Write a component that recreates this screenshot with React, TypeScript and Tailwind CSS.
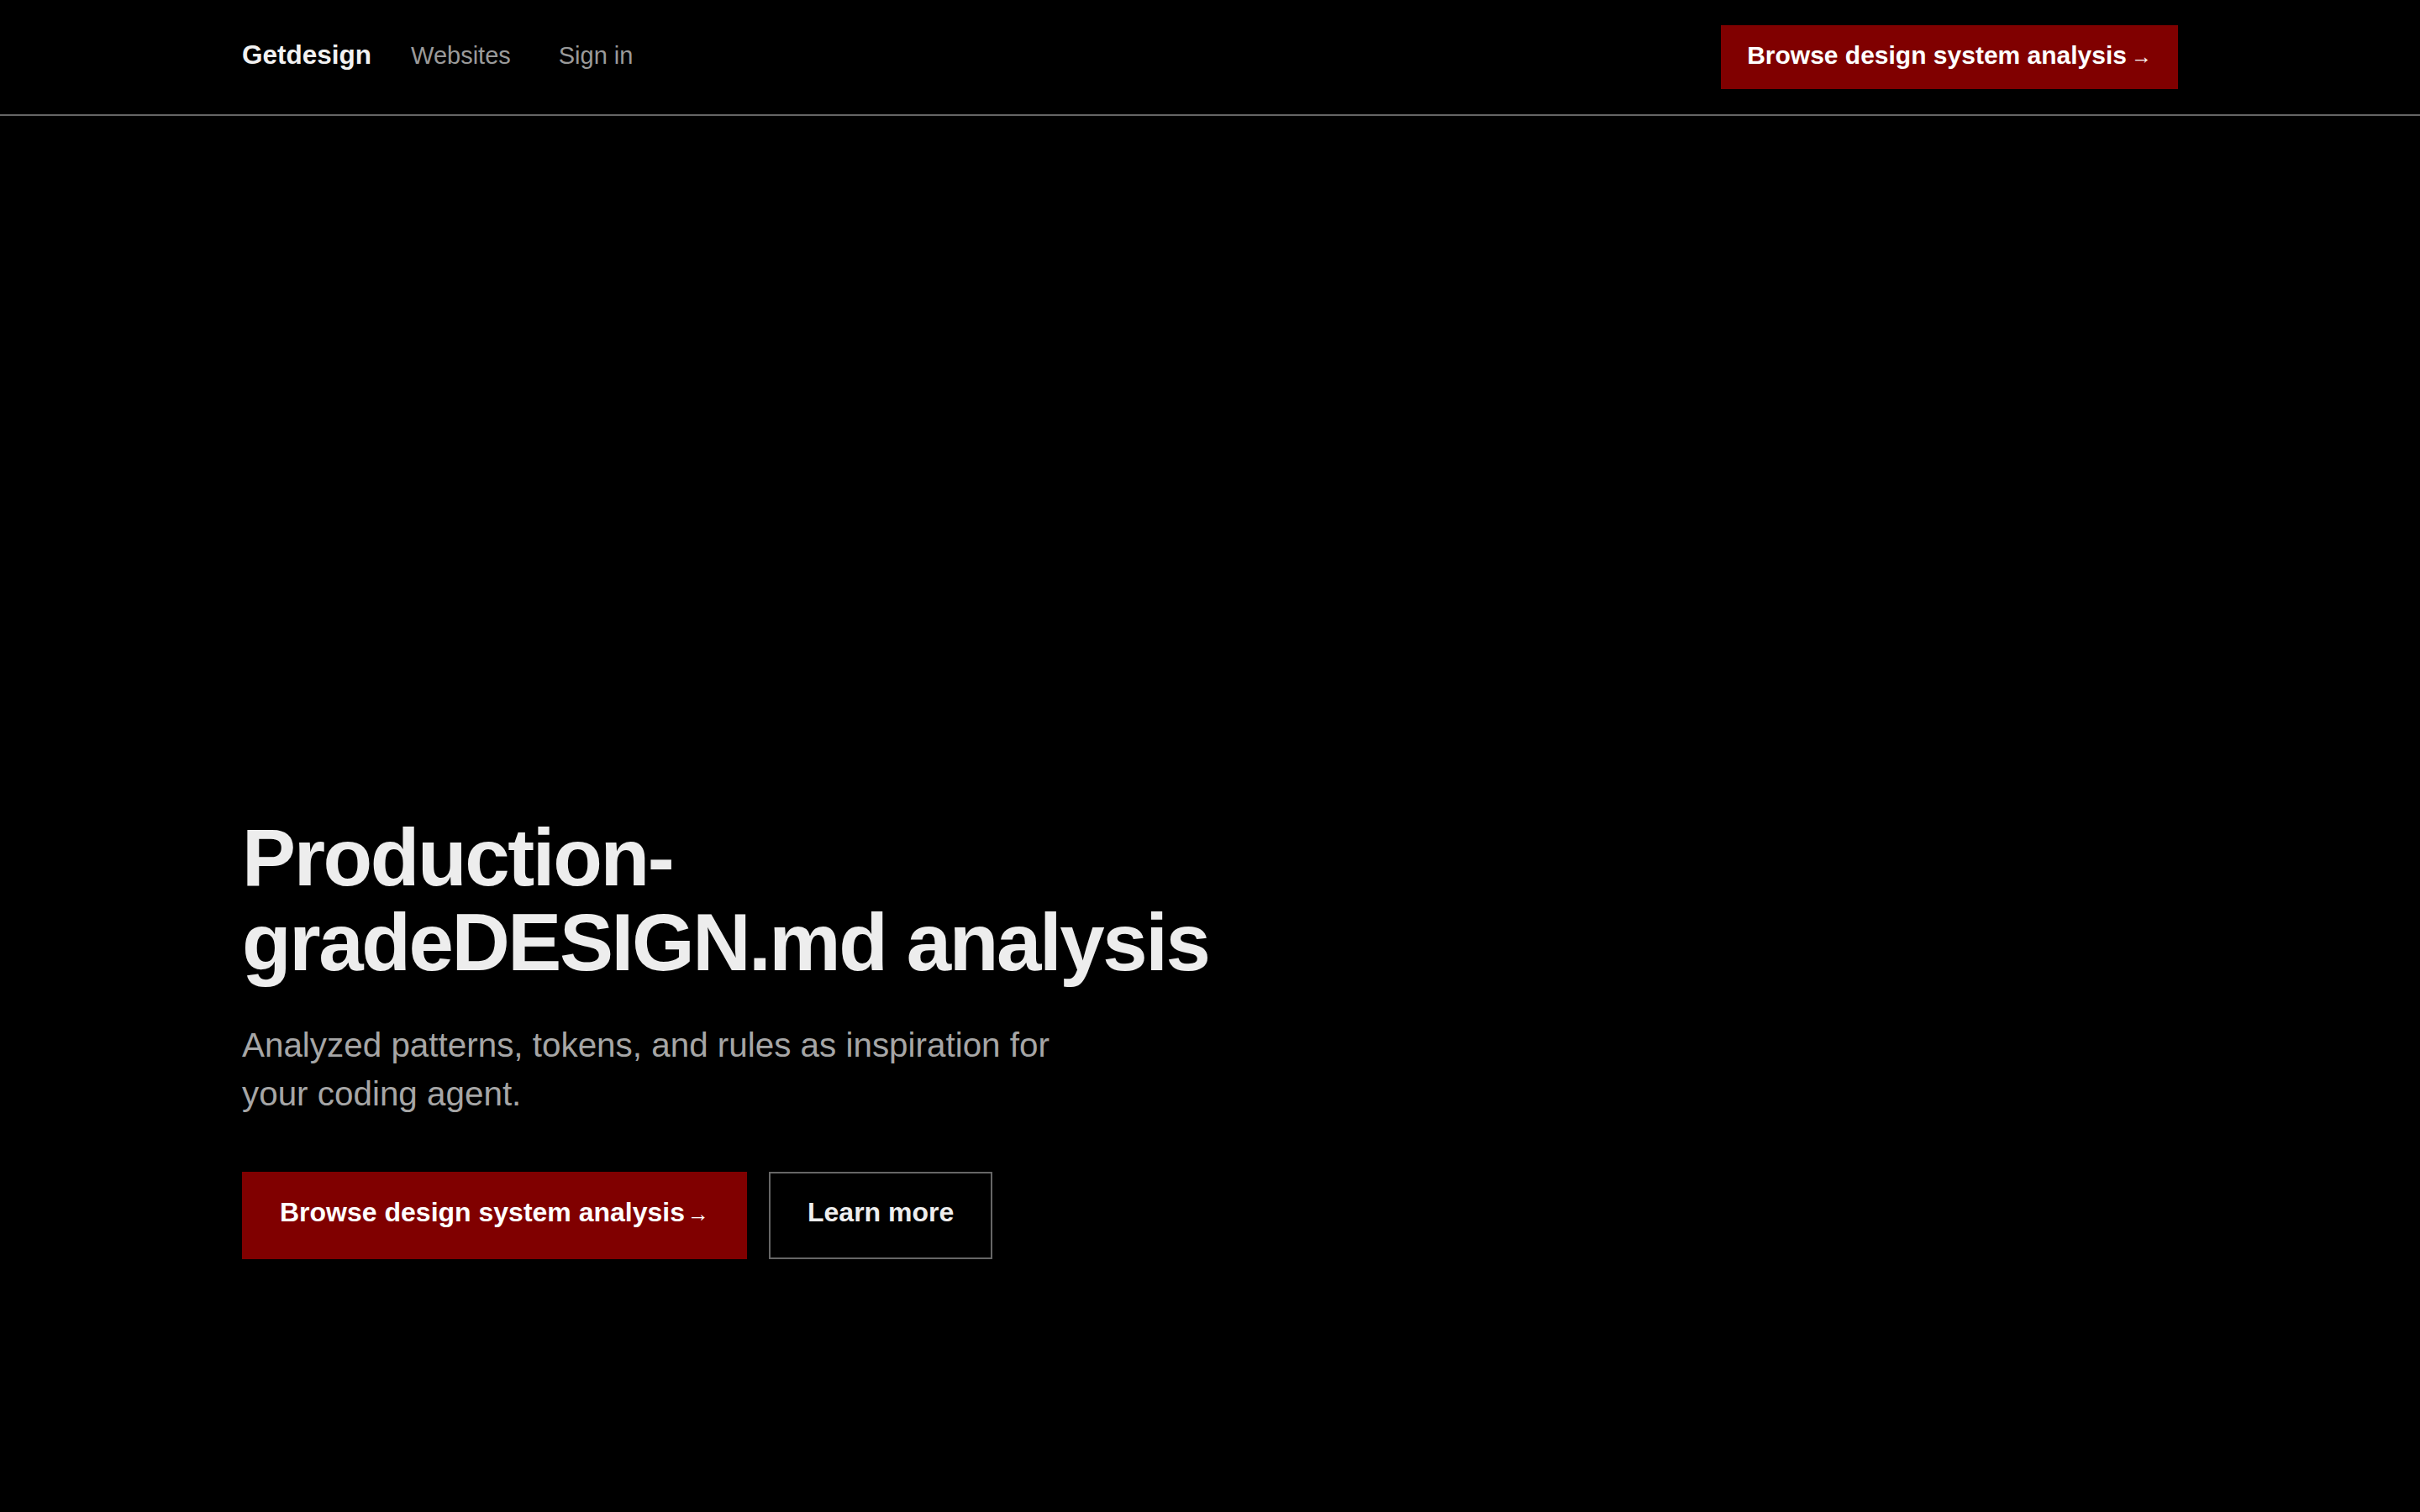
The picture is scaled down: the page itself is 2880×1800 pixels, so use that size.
import React from 'react';

export default function App() {
  return (
    <div className="min-h-screen bg-black font-['Liberation_Sans',Arial,sans-serif] text-[#ededed]">
      {/* Header */}
      <header className="border-b-2 border-[#666]">
        <div className="mx-auto flex w-[2304px] items-baseline justify-between py-[30px]">
          <nav className="flex items-baseline">
            <a className="text-[31.5px] font-bold text-[#f2f2f2]">Getdesign</a>
            <a className="ml-[47px] text-[29px] text-[#9a9a9a]">Websites</a>
            <a className="ml-[57px] text-[29px] text-[#9a9a9a]">Sign in</a>
          </nav>
          <a className="flex h-[76px] items-baseline border-2 border-[#800000] bg-[#800000] px-[29px] pt-[15px] text-[30px] leading-[38px] font-bold text-white">
            Browse design system analysis
            <span className="ml-[5px] text-[25px] font-normal">→</span>
          </a>
        </div>
      </header>

      {/* Hero */}
      <main className="mx-auto flex min-h-[1662px] w-[2304px] flex-col justify-end pb-[301px]">
        <h1 className="max-w-[1200px] text-[96px] leading-[101px] font-bold tracking-[-2.4px] text-[#ededed]">
          Production-gradeDESIGN.md analysis
        </h1>
        <p className="mt-[43px] max-w-[1000px] text-[40.4px] leading-[58px] text-[#a6a6a6]">
          Analyzed patterns, tokens, and rules as inspiration for your coding agent.
        </p>
        <div className="mt-[64px] flex gap-[26px]">
          <a className="flex h-[104px] items-baseline border-2 border-[#800000] bg-[#800000] px-[43px] pt-[26px] text-[32px] leading-[40px] font-bold text-white">
            Browse design system analysis
            <span className="ml-[3px] text-[26px] font-normal">→</span>
          </a>
          <a className="flex h-[104px] items-baseline border-2 border-[#666] px-[44px] pt-[26px] text-[32px] leading-[40px] font-bold text-[#eeeeee]">
            Learn more
          </a>
        </div>
      </main>
    </div>
  );
}
